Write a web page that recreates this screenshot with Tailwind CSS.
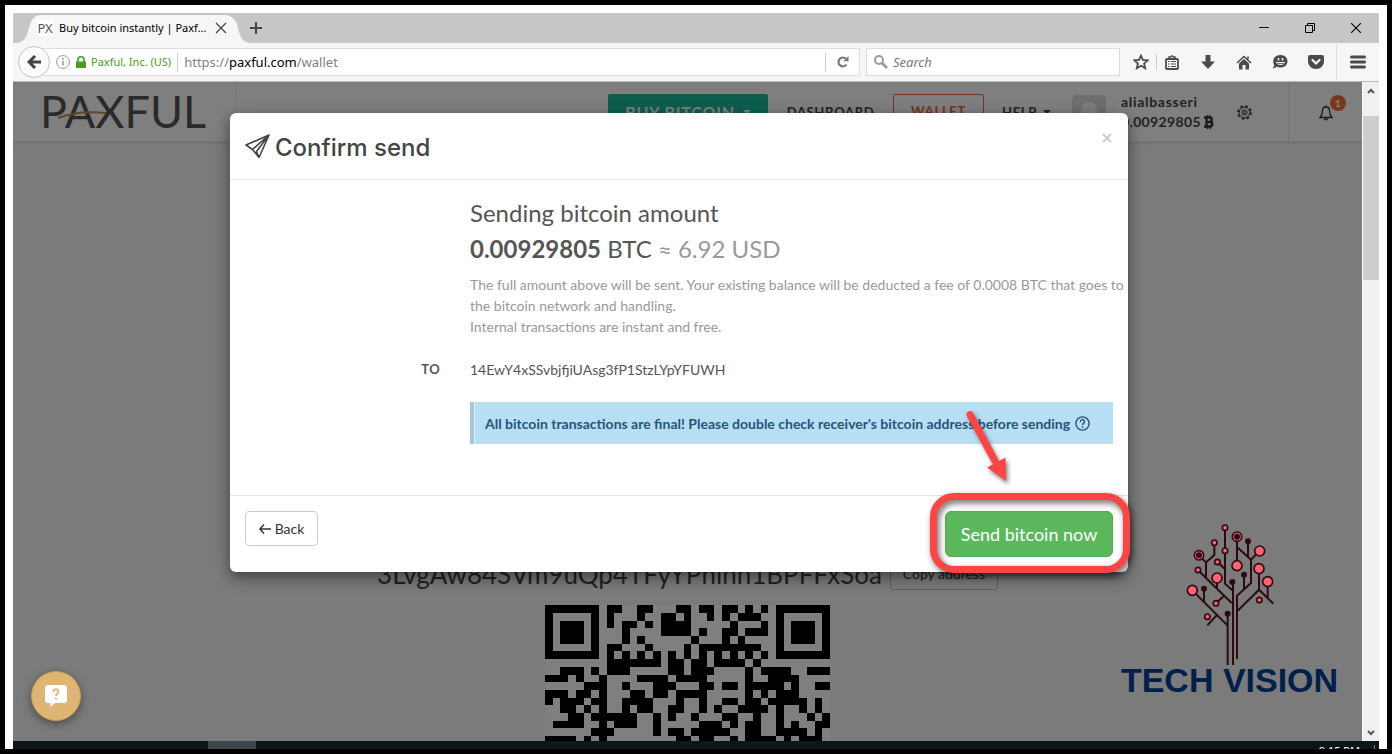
<!doctype html>
<html lang="en">
    <head>
        <meta charset="UTF-8" />
        <meta name="viewport" content="width=device-width, initial-scale=1.0" />
        <title>Buy bitcoin instantly | Paxful</title>
        <script src="https://cdn.jsdelivr.net/npm/@tailwindcss/browser@4"></script>
    </head>
    <body class="h-screen overflow-hidden bg-black p-[5px] font-['Lato',sans-serif] text-sm">
        <div class="flex h-full flex-col bg-white px-2 pt-2">
            <!-- Tab strip -->
            <div class="flex h-[30px] shrink-0 items-stretch bg-[#c6c6c6] font-['Noto_Sans',sans-serif] text-[11px] text-black">
                <div class="relative flex w-[237px] items-center pl-6">
                    <svg class="absolute top-[2px] left-0" width="240" height="28" viewBox="0 0 240 28" fill="#f6f6f6">
                        <path d="M2 28C10 28 13 24 15 16C18 5 20 0 29 0H211C220 0 223 5 225 13C227 22 230 28 238 28Z" />
                    </svg>
                    <span class="relative flex h-4 w-4 items-center justify-center bg-white text-[13px] text-[#555]">PX</span>
                    <span class="relative ml-[6px] w-[149px] whitespace-nowrap">Buy bitcoin instantly | Paxf...</span>
                    <button class="relative ml-[3px] flex h-5 w-5 items-center justify-center" aria-label="Close tab">
                        <svg width="12" height="12" viewBox="0 0 12 12" stroke="#444" stroke-width="1.3"><path d="M1 1L11 11M11 1L1 11" /></svg>
                    </button>
                </div>
                <button class="relative flex w-6 items-center" aria-label="New tab">
                    <svg width="12" height="12" viewBox="0 0 12 12" stroke="#444" stroke-width="2"><path d="M6 0V12M0 6H12" /></svg>
                </button>
                <div class="ml-auto flex">
                    <button class="flex w-[46px] items-center justify-center" aria-label="Minimize">
                        <svg width="10" height="10" viewBox="0 0 10 10" stroke="#000"><path d="M0 4.5H10" /></svg>
                    </button>
                    <button class="flex w-[46px] items-center justify-center" aria-label="Restore">
                        <svg width="10" height="10" viewBox="0 0 10 10" fill="none" stroke="#000"><path d="M.5 2.5H7.5V9.5H.5ZM2.5 2.5V.5H9.5V7.5H7.5" /></svg>
                    </button>
                    <button class="flex w-[46px] items-center justify-center" aria-label="Close">
                        <svg width="10" height="10" viewBox="0 0 10 10" stroke="#000" stroke-width="1.1"><path d="M0 0L10 10M10 0L0 10" /></svg>
                    </button>
                </div>
            </div>

            <!-- Address bar -->
            <div class="flex h-[39px] shrink-0 items-center border-b border-[#b8b8b8] bg-[#f6f6f6] pl-[5px] font-['Noto_Sans',sans-serif]">
                <button class="relative z-10 flex h-8 w-8 shrink-0 items-center justify-center rounded-full border border-[#c4c4c4] bg-[#fbfbfb]" aria-label="Back">
                    <svg width="14" height="14" viewBox="0 0 14 14" fill="none" stroke="#444" stroke-width="3"><path d="M14 7H2.500M8 1L2 7L8 13" /></svg>
                </button>
                <div class="-ml-2 flex h-7 flex-1 items-center border border-[#dcdcdc] bg-white pl-[13px]">
                    <svg width="14" height="14" viewBox="0 0 14 14" fill="none" stroke="#999"><circle cx="7" cy="7" r="6.400" /><path d="M7 6V10.500M7 3V4.700" stroke-width="1.500" /></svg>
                    <svg class="ml-[6px]" width="10" height="12" viewBox="0 0 10 12" fill="#4a9a23"><path d="M0 5.500H10V12H0Z" /><path d="M2 6V3.500A3 2.800 0 0 1 8 3.500V6" fill="none" stroke="#4a9a23" stroke-width="1.700" /></svg>
                    <span class="ml-[5px] text-[11px] whitespace-nowrap text-[#4a9a23]">Paxful, Inc. (US)</span>
                    <span class="mx-[6px] h-[18px] w-px bg-[#ccc]"></span>
                    <div class="flex-1 text-[13px] whitespace-nowrap text-[#808080]" role="textbox" aria-label="Address" contenteditable="true">https://<span class="text-black">paxful.com</span>/wallet</div>
                    <button class="flex h-[18px] w-[34px] items-center justify-center border-l border-[#ccc]" aria-label="Reload">
                        <svg width="12" height="12" viewBox="0 0 12 12"><path d="M9.500 8.500A4.400 4.400 0 1 1 9 2.800" fill="none" stroke="#777" stroke-width="2.100" /><path d="M11.500 0V5.200H6.300Z" fill="#777" /></svg>
                    </button>
                </div>
                <label class="ml-[6px] flex h-7 w-[254px] items-center border border-[#dcdcdc] bg-white pl-[7px]">
                    <svg width="14" height="14" viewBox="0 0 14 14" fill="none" stroke="#999" stroke-width="2"><circle cx="5" cy="5" r="4" /><path d="M8 8L13 13" stroke-width="2.600" /></svg>
                    <input type="text" placeholder="Search" aria-label="Search" class="ml-[5px] min-w-0 flex-1 text-[13px] italic outline-none placeholder:text-[#777]" />
                </label>
                <button class="ml-2 flex w-[26px] items-center justify-center" aria-label="Bookmark">
                    <svg width="16" height="16" viewBox="0 0 16 16" fill="none" stroke="#4a4a4a" stroke-width="1.800"><path d="M8 1.600L9.900 5.900L14.700 6.300L11.100 9.500L12.200 14.200L8 11.700L3.800 14.200L4.900 9.500L1.300 6.300L6.100 5.900Z" /></svg>
                </button>
                <span class="ml-[2px] h-4 w-px bg-[#ccc]"></span>
                <button class="mr-[3px] flex h-4 w-[30px] items-center justify-center" aria-label="Library">
                    <svg width="14" height="15" viewBox="0 0 14 15" fill="none" stroke="#4a4a4a"><rect x="1" y="4" width="12" height="10" rx="1" stroke-width="1.800" /><path d="M4 3.500V2H5.500L7 .8L8.500 2H10V3.500" stroke-width="1.400" /><path d="M3 6.500H4.500M6 6.500H11M3 9H4.500M6 9H11M3 11.500H4.500M6 11.500H11" stroke-width="1.200" /></svg>
                </button>
                <button class="flex w-9 items-center justify-center" aria-label="Downloads">
                    <svg width="14" height="14" viewBox="0 0 14 14" fill="#4a4a4a"><path d="M4.500 0H9.500V6.500H14L7 14L0 6.500H4.500Z" /></svg>
                </button>
                <button class="flex w-9 items-center justify-center" aria-label="Home">
                    <svg width="16" height="15" viewBox="0 0 16 15" fill="#4a4a4a"><path d="M8 4L13 8.500V14.500H9.500V10H6.500V14.500H3V8.500Z" /><path d="M1 8L8 1.500L15 8M12 1.500V4" fill="none" stroke="#4a4a4a" stroke-width="1.600" /></svg>
                </button>
                <button class="flex w-9 items-center justify-center" aria-label="Chat">
                    <svg width="16" height="14" viewBox="0 0 16 14"><path d="M8.500 0C12.800 0 15.500 2.800 15.500 6.200S12.800 12.500 8.500 12.500C6.800 12.500 5.500 12.200 4.500 11.600C3.500 13 2 13.500.5 13.500C1.500 12.500 2 11.500 2.200 10C1.500 9 1.200 7.600 1.200 6.200C1.200 2.800 4.200 0 8.500 0Z" fill="#4a4a4a" /><path d="M6.500 3V5.500M10.500 3V5.500" stroke="#f6f6f6" stroke-width="1.500" /><path d="M4 7H13C12.500 11 4.500 11 4 7Z" fill="#f6f6f6" /><path d="M5 8.500H12" stroke="#4a4a4a" stroke-width=".8" /></svg>
                </button>
                <button class="flex w-9 items-center justify-center" aria-label="Pocket">
                    <svg width="16" height="14" viewBox="0 0 16 14"><path d="M2 0H14Q16 0 16 2V6C16 10.500 12.500 14 8 14S0 10.500 0 6V2Q0 0 2 0Z" fill="#4a4a4a" /><path d="M4.500 5L8 8.500L11.500 5" fill="none" stroke="#f6f6f6" stroke-width="2.200" stroke-linecap="round" /></svg>
                </button>
                <button class="ml-[2px] flex h-9 w-[43px] items-center justify-center border-l border-[#ddd]" aria-label="Menu">
                    <svg width="16" height="14" viewBox="0 0 16 14" stroke="#4a4a4a" stroke-width="3" stroke-linecap="round"><path d="M1.500 2H14.500M1.500 7H14.500M1.500 12H14.500" /></svg>
                </button>
            </div>

            <!-- Viewport -->
            <div class="flex min-h-0 flex-1">
                <div class="relative flex-1 overflow-hidden bg-[#f7f7f7]">
                    <header class="flex h-[60px] items-center border-b border-[#eaeaea] bg-white text-[#444] shadow-sm">
                        <a href="#" class="relative flex h-full w-56 items-center border-r border-[#eee] pl-[27px] text-[45px] leading-none text-[#555]">
                            PAXFUL
                            <svg class="absolute top-7 left-11" width="50" height="10" viewBox="0 0 50 10" fill="none" stroke="#b8904f" stroke-width="2"><path d="M1 8C14 3 31 1 49 3" /></svg>
                        </a>
                        <nav class="ml-auto flex items-center text-[13px] font-bold tracking-wider">
                            <button class="flex h-9 w-40 items-center justify-center gap-2 rounded-xs bg-[#1abc9c] text-base tracking-wider text-white">BUY BITCOIN
                                <svg width="8" height="4" viewBox="0 0 8 4" fill="#fff"><path d="M0 0H8L4 4Z" /></svg>
                            </button>
                            <a href="#" class="w-[125px] pt-px text-center">DASHBOARD</a>
                            <a href="#" class="flex h-9 w-[91px] items-center justify-center rounded-xs border border-[#e8683a] text-[#e8683a]">WALLET</a>
                            <a href="#" class="ml-[18px] flex w-[70px] items-center gap-[6px] pt-px">HELP
                                <svg width="8" height="4" viewBox="0 0 8 4" fill="#444"><path d="M0 0H8L4 4Z" /></svg>
                            </a>
                        </nav>
                        <div class="flex h-[34px] w-[34px] items-center justify-center rounded bg-[#dcdcdc]"><span class="-mt-1 h-4 w-4 rounded-full bg-[#fafafa]"></span></div>
                        <div class="ml-[15px] w-[116px] text-sm leading-5 font-bold tracking-wide">
                            <div class="tracking-wider">alialbasseri</div>
                            <div class="flex items-center gap-[3px]">0.00929805
                                <svg width="10" height="14" viewBox="0 0 10 14" fill="none" stroke="#333" stroke-width="2.400"><path d="M0 2.500H5.500A2.200 2.200 0 0 1 5.500 7H2.500M0 11.500H6A2.250 2.250 0 0 0 6 7M2.500 2.500V11.500" /><path d="M3.500 0V2.500M6 0V2.500M3.500 11.500V14M6 11.500V14" stroke-width="1.400" /></svg>
                            </div>
                        </div>
                        <button class="flex w-[51px] pt-[2px]" aria-label="Settings">
                            <svg width="15" height="15" viewBox="0 0 15 15" fill="none" stroke="#333"><circle cx="7.500" cy="7.500" r="6.500" stroke-width="1.600" stroke-dasharray="2.600 2.500" /><circle cx="7.500" cy="7.500" r="5.300" /><circle cx="7.500" cy="7.500" r="2.600" /><circle cx="7.500" cy="7.500" r="1" /></svg>
                        </button>
                        <button class="relative flex h-full w-[74px] items-center justify-center border-l border-[#eaeaea] pt-[2px]" aria-label="Notifications">
                            <svg width="14" height="16" viewBox="0 0 14 16" fill="none" stroke="#333" stroke-width="1.300"><path d="M1 12.500C3 10.500 3.500 9 3.500 5.500C3.500 3.300 4.800 2 7 2S10.500 3.300 10.500 5.500C10.500 9 11 10.500 13 12.500ZM7 2V.5M5.500 13.500C5.700 15.300 8.300 15.300 8.500 13.500" /></svg>
                            <span class="absolute top-[13px] right-4 flex h-4 w-4 items-center justify-center rounded-full bg-[#f07034] text-[10px] font-bold text-white">1</span>
                        </button>
                    </header>
                    <main class="flex flex-col items-center pt-[414px]">
                        <div class="flex h-[34px] items-center gap-2">
                            <span class="pt-1 text-[26px] text-[#444]">3LvgAw84SVm9uQp4TFyYPhihh1BPFFxSoa</span>
                            <button class="h-[34px] w-[108px] rounded border border-[#bbb] pt-[2px] text-sm text-[#333]">Copy address</button>
                        </div>
                        <svg class="mt-[15px] bg-white" width="285" height="139" viewBox="0 0 37 18" shape-rendering="crispEdges"><path id="qr" d="" /></svg>
                    </main>

                    <div class="absolute inset-0 flex items-start justify-center bg-black/50 pt-[31px] pr-[17px]">
                        <div class="w-[898px] rounded-md bg-white text-[#555] shadow-[0_5px_15px_rgba(0,0,0,0.5)]" role="dialog" aria-labelledby="modalTitle">
                            <div class="flex h-[67px] items-center border-b border-[#e5e5e5] px-[15px]">
                                <svg width="25" height="25" viewBox="0 0 25 25" fill="none" stroke="#444" stroke-width="1.600" stroke-linejoin="round"><path d="M24 1L1 11L7.500 15.500L14 23.500ZM24 1L7.500 15.500M24 1L11.500 17.500L14 23.500" /></svg>
                                <h1 id="modalTitle" class="ml-[5px] pt-[3px] font-['Inter',sans-serif] text-2xl font-medium text-[#444]">Confirm send</h1>
                                <button class="mt-[15px] ml-auto flex h-5 w-3 items-center justify-center self-start" aria-label="Close dialog">
                                    <svg width="10" height="10" viewBox="0 0 10 10" stroke="#ccc" stroke-width="2"><path d="M1 1L9 9M9 1L1 9" /></svg>
                                </button>
                            </div>
                            <div class="grid grid-cols-[195px_minmax(0,1fr)] gap-x-[30px] px-[15px] pt-[19px] pb-[51px]">
                                <div class="col-start-2">
                                    <h2 class="text-2xl leading-7">Sending bitcoin amount</h2>
                                    <p class="mt-1 text-2xl leading-9"><b>0.00929805</b> BTC <span class="text-[#999]">≈ 6.92 USD</span></p>
                                    <p class="mt-[7px] leading-[21px] whitespace-nowrap text-[#999]">The full amount above will be sent. Your existing balance will be deducted a fee of 0.0008 BTC that goes to<br />the bitcoin network and handling.<br />Internal transactions are instant and free.</p>
                                </div>
                                <div class="mt-[22px] text-right text-[13px] leading-[21px] font-bold tracking-wide">TO</div>
                                <div class="mt-[22px] leading-[21px]">14EwY4xSSvbjfjiUAsg3fP1StzLYpYFUWH</div>
                                <div class="col-start-2 mt-[22px] flex h-[42px] items-center border-l-4 border-[#a3c6da] bg-[#b8def4] font-bold text-[#1f567a]">
                                    <span class="mr-[10px] h-full w-px bg-[#e3f2fb]"></span>
                                    <span class="pt-px">All bitcoin transactions are final! Please double check receiver's bitcoin address before sending</span>
                                    <svg class="ml-[5px]" width="15" height="15" viewBox="0 0 15 15" fill="none" stroke="#1f567a" stroke-width="1.400"><circle cx="7.500" cy="7.500" r="6.600" /><path d="M5.500 6A2 2 0 1 1 8.500 7.300Q7.500 7.800 7.500 9M7.500 10.300V11.700" /></svg>
                                </div>
                            </div>
                            <div class="flex items-start justify-between border-t border-[#e5e5e5] p-[15px]">
                                <button class="flex h-[35px] w-[73px] items-center justify-center gap-1 rounded border border-[#ccc] pt-px text-sm text-[#333]">
                                    <svg width="12" height="10" viewBox="0 0 12 10" fill="none" stroke="#333" stroke-width="1.500"><path d="M12 5H1M5 .5L1 5L5 9.500" /></svg>
                                    Back
                                </button>
                                <div class="relative">
                                    <button class="h-[46px] w-[168px] rounded-md border border-[#4cae4c] bg-[#5cb85c] text-lg text-white">Send bitcoin now</button>
                                    <!-- Highlight -->
                                    <div class="pointer-events-none absolute -top-[18px] -right-[17px] -bottom-4 -left-[15px] rounded-3xl border-[7px] border-[#ff4444] drop-shadow-[2px_3px_3px_rgba(0,0,0,0.6)]"></div>
                                    <svg class="pointer-events-none absolute -top-[106px] left-[15px] drop-shadow-[2px_3px_2px_rgba(0,0,0,0.5)]" width="60" height="90" viewBox="0 0 60 90" fill="#ff4444"><path d="M10 9.500L35 56" stroke="#ff4444" stroke-width="7" stroke-linecap="round" /><path d="M46 76L27 62.500L45.500 52.500Z" /></svg>
                                </div>
                            </div>
                        </div>
                    </div>

                    <!-- Watermark -->
                    <div class="absolute right-[24px] bottom-[39px] flex w-[217px] flex-col items-center">
                        <svg width="88" height="143" viewBox="255 40 264 429" fill="none" stroke="#2e0a10" stroke-width="6">
                            <path d="M380 466V312M396 466V217M408 448V258L450 220V150L408 112V80M408 112V168M441 95V140M450 150L476 124M429 195V238M372 54V222L394 242M349 157L372 178M340 99V136L315 158V205L392 280M294 137L315 158M291 181L315 205M348 205V235M345 280L368 260M274 242L380 348M309 237V275M346 318L319 347M410 303L474 240L517 282M474 177V240M500 216V264" />
                            <g fill="#ff6175" stroke-width="5"><circle cx="372" cy="54" r="8" /><circle cx="340" cy="99" r="8" /><circle cx="372" cy="123" r="8" /><circle cx="349" cy="157" r="8" /><circle cx="291" cy="181" r="8" /><circle cx="345" cy="281" r="8" /><circle cx="319" cy="321" r="8" /><circle cx="475" cy="271" r="8" /><circle cx="476" cy="124" r="15" /><circle cx="408" cy="168" r="15" /><circle cx="474" cy="177" r="15" /><circle cx="500" cy="216" r="15" /><circle cx="348" cy="205" r="15" /><circle cx="274" cy="242" r="15" /><circle cx="408" cy="81" r="14" /><circle cx="294" cy="137" r="14" /></g>
                            <g fill="#2e0a10" stroke="none"><circle cx="408" cy="81" r="9" /><circle cx="294" cy="137" r="9" /><circle cx="441" cy="95" r="9" /><circle cx="429" cy="195" r="9" /><circle cx="394" cy="217" r="9" /><circle cx="309" cy="237" r="9" /><circle cx="380" cy="312" r="9" /></g>
                        </svg>
                        <div class="-mt-2 font-['Liberation_Sans_Narrow','Liberation_Sans',sans-serif] text-[34px] leading-[44px] font-bold whitespace-nowrap text-[#001f4b]">TECH VISION</div>
                    </div>

                    <button class="absolute bottom-5 left-[18px] flex h-[50px] w-[50px] items-center justify-center rounded-full border border-[#c29a5c] bg-[#dfb573] shadow-[0_3px_10px_rgba(0,0,0,0.4)]" aria-label="Help chat">
                        <svg width="22" height="22" viewBox="0 0 22 22" fill="#fff"><path d="M3 0H19Q22 0 22 3V15Q22 18 19 18H10L5.500 22V18H3Q0 18 0 15V3Q0 0 3 0Z" /><path d="M8.500 7A2.500 2.500 0 1 1 12.500 8.600Q11 9.500 11 11M11 12.700V14.700" fill="none" stroke="#dfb573" stroke-width="1.800" /></svg>
                    </button>
                </div>

                <!-- Scrollbar -->
                <div class="flex w-[17px] flex-col items-center border-l border-white bg-[#f0f0f0]">
                    <svg class="mt-[6px] shrink-0" width="8" height="6" viewBox="0 0 8 6" fill="none" stroke="#555" stroke-width="2"><path d="M1 5L4 2L7 5" /></svg>
                    <div class="mt-[22px] h-[164px] w-full bg-[#cdcdcd]"></div>
                    <svg class="mt-auto mb-[5px] shrink-0" width="8" height="6" viewBox="0 0 8 6" fill="none" stroke="#555" stroke-width="2"><path d="M1 1L4 4L7 1" /></svg>
                </div>
            </div>

            <!-- Taskbar -->
            <div class="flex h-2 shrink-0 overflow-hidden bg-[#0b151a]">
                <div class="ml-[195px] w-12 bg-[#3d464c]"></div>
                <div class="mt-1 mr-[4px] ml-auto border-r border-[#777] pr-[14px] font-['Noto_Sans',sans-serif] text-[11px] leading-3 text-white">9:15 PM</div>
            </div>
        </div>

        <script>
            // QR modules, one string per row
            const rows = [
                "#######.##..##...##.##.##.#.#.#######",
                "#.....#.#...#..##.#..#.#.###..#.....#",
                "#.###.#.#.##.#.####.....#...#.#.###.#",
                "#.###.#...#....####.#..##.###.#.###.#",
                "#.###.#...#.#......#...#.#....#.###.#",
                "#.....#.##...#....#.########..#.....#",
                "#######.#.#.#.#.#.#.#.#.#.#.#.#######",
                "........#######.##.##.####.#.........",
                "..###.#.###.....##.###....#.####..###",
                "###.#..#....####.####.....#..####....",
                ".....###..#...###...##.##.#####.#..##",
                "###.##.#...##.##.####.....#.#.###....",
                "#.###.##..####...#..#..##.##.#####.#.",
                "..##.#.#..#.##..##..#.#..####.#..#.#.",
                "...##.######..#.#..#...##..#..#...#.#",
                ".####..#.###..#.....###.#.##..#.#..##",
                "......###.....#.##.#####..##..####.#.",
                "####.#.#.........##.##..#.####.#.###.",
            ];
            let d = "";
            rows.forEach((row, y) => {
                [...row].forEach((cell, x) => {
                    if (cell === "#") d += `M${x} ${y}h1v1h-1z`;
                });
            });
            document.getElementById("qr").setAttribute("d", d);
        </script>
    </body>
</html>
